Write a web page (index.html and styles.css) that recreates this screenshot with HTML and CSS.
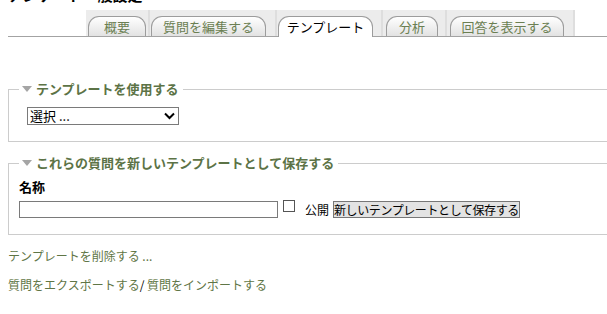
FILE: index.html
```html
<!DOCTYPE html>
<html lang="ja">
<head>
    <meta charset="UTF-8">
    <meta name="viewport" content="width=device-width, initial-scale=1.0">
    <title>テンプレート</title>
    <link rel="stylesheet" href="styles.css">
</head>
<body>
    <h2 class="page-title">アンケート一般設定</h2>

    <div class="tabbar">
        <div class="tabrow">
            <div class="cell c1"><a class="tab" href="#">概要</a></div>
            <div class="cell c2"><a class="tab" href="#">質問を編集する</a></div>
            <div class="cell c3"><a class="tab current" href="#">テンプレート</a></div>
            <div class="cell c4"><a class="tab" href="#">分析</a></div>
            <div class="cell c5"><a class="tab" href="#">回答を表示する</a></div>
        </div>
    </div>

    <fieldset class="box first">
        <legend><span class="arrow"></span>テンプレートを使用する</legend>
        <div class="select-wrap">
            <select class="picker">
                <option>選択 ...</option>
            </select>
            <svg class="chevron" width="11" height="8" viewBox="0 0 11 8">
                <path d="M1 1.5 L5.5 6 L10 1.5" fill="none" stroke="#000" stroke-width="2"/>
            </svg>
        </div>
    </fieldset>

    <fieldset class="box second">
        <legend><span class="arrow"></span>これらの質問を新しいテンプレートとして保存する</legend>
        <div class="field-label">名称</div>
        <div class="save-row">
            <input type="text" class="name-input">
            <input type="checkbox" class="check" id="public">
            <label for="public" class="check-label">公開</label>
            <button type="button" class="btn">新しいテンプレートとして保存する</button>
        </div>
    </fieldset>

    <p class="link-line"><a href="#">テンプレートを削除する ...</a></p>
    <p class="link-line second-link"><a href="#">質問をエクスポートする</a>/ <a href="#">質問をインポートする</a></p>
</body>
</html>
```

FILE: styles.css
```css
body {
    margin: 0;
    padding: 0;
    font-family: "Noto Sans CJK JP", "Noto Sans", sans-serif;
    font-size: 12px;
    color: #000;
    background-color: #fff;
    overflow: hidden;
}
a {
    color: #5f7646;
    text-decoration: none;
}
.page-title {
    margin: -13px 8px 0;
    font-size: 15px;
    line-height: 16px;
    height: 16px;
    font-weight: bold;
}
.tabbar {
    margin: 7px 0 0 8px;
    padding-left: 78px;
    border-bottom: 1px solid #a3a3a3;
}
.tabrow {
    display: flex;
    width: max-content;
    background-color: #ececec;
}
.cell {
    display: flex;
    flex-shrink: 0;
    box-sizing: border-box;
    padding: 6px 0 0 2px;
    border-right: 2px solid #dedede;
}
.c1 { width: 64px; }
.c2 { width: 127px; padding-left: 1px; }
.c3 { width: 106px; padding-left: 1px; }
.c4 { width: 64px; padding-left: 3px; }
.c5 { width: 128px; padding-left: 3px; }
.tab {
    display: block;
    box-sizing: border-box;
    height: 20px;
    line-height: 19px;
    text-align: center;
    white-space: nowrap;
    font-size: 13px;
    color: #6b7f52;
    border: 1px solid #9c9c9c;
    border-bottom: none;
    border-radius: 11px 11px 0 0;
    background: linear-gradient(#ffffff, #e2e2e2);
}
.c1 .tab { width: 58px; }
.c2 .tab { width: 115px; }
.c3 .tab { width: 95px; }
.c4 .tab { width: 52px; }
.c5 .tab { width: 114px; }
.tab.current {
    color: #000;
    background: #fff;
    margin-bottom: -1px;
    height: 21px;
}
.box {
    margin: 0 0 0 8px;
    padding: 0 0 16px 10px;
    border: 1px solid #cccccc;
    border-right: none;
}
.box.first {
    margin-top: 44px;
}
.box.second {
    margin-top: 13px;
}
legend {
    padding: 0 4px 0 3px;
    font-size: 13px;
    line-height: 16px;
    font-weight: bold;
    color: #5c7346;
}
.arrow {
    display: inline-block;
    width: 0;
    height: 0;
    margin: 0 4px 2px 0;
    border-left: 5px solid transparent;
    border-right: 5px solid transparent;
    border-top: 6px solid #a5a5a5;
}
.select-wrap {
    position: relative;
    width: 152px;
    margin: 10px 0 0 8px;
}
.picker {
    appearance: none;
    display: block;
    width: 152px;
    height: 18px;
    padding: 0 0 0 2px;
    border: 1px solid #7a7a7a;
    border-radius: 0;
    background: #fff;
    font-family: "Noto Sans CJK JP", sans-serif;
    font-size: 13px;
    line-height: 16px;
    color: #000;
}
.chevron {
    position: absolute;
    right: 4px;
    top: 5px;
}
.field-label {
    margin: 8px 0 0 0;
    font-size: 13px;
    line-height: 16px;
    font-weight: bold;
}
.save-row {
    display: flex;
    align-items: flex-start;
    margin-top: 6px;
}
.name-input {
    width: 259px;
    height: 17px;
    box-sizing: border-box;
    margin: 0;
    border: 1px solid #7a7a7a;
    padding: 0 2px;
}
.check {
    appearance: none;
    width: 12px;
    height: 12px;
    margin: -1px 0 0 5px;
    border: 1px solid #555;
    background: #fff;
}
.check-label {
    margin-left: 10px;
    font-size: 12px;
    line-height: 17px;
}
.btn {
    height: 17px;
    margin-left: 4px;
    padding: 0;
    border: 1px solid #777;
    border-radius: 0;
    background-color: #e3e3e3;
    font-family: "Noto Sans CJK JP", sans-serif;
    font-size: 12px;
    letter-spacing: -0.4px;
    line-height: 14px;
    color: #000;
}
.link-line {
    margin: 13px 0 0 8px;
    line-height: 16px;
}
.second-link {
    margin-top: 13px;
}
```
